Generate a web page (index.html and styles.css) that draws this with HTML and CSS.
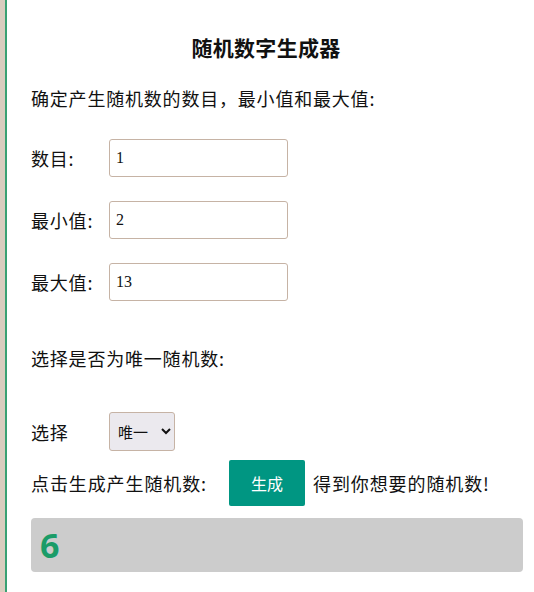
FILE: index.html
```html
<!DOCTYPE html>
<html lang="zh">

<head>
	<meta charset="utf-8">
	<title>随机数字生成器</title>
	<link rel="stylesheet" href="styles.css">
</head>

<body>

	<div class="page">
		<h3 class="title">随机数字生成器</h3>
		<p class="intro">确定产生随机数的数目，最小值和最大值:</p>

		<div class="field">
			<label for="count">数目:</label>
			<input id="count" type="text" value="1">
		</div>
		<div class="field">
			<label for="min">最小值:</label>
			<input id="min" type="text" value="2">
		</div>
		<div class="field">
			<label for="max">最大值:</label>
			<input id="max" type="text" value="13">
		</div>

		<p class="intro unique-intro">选择是否为唯一随机数:</p>

		<div class="field select-field">
			<label for="unique">选择</label>
			<select id="unique">
				<option>唯一</option>
				<option>不唯一</option>
			</select>
		</div>

		<div class="gen-row">
			<span>点击生成产生随机数:</span>
			<button id="gen" class="gen-btn">生成</button>
			<span>得到你想要的随机数!</span>
		</div>

		<div id="result" class="result">6</div>
	</div>

</body>

</html>
```

FILE: styles.css
```css
body {
	margin: 0;
	padding: 0;
	background-color: #dacdbf;
	font-family: "Noto Sans CJK SC", "Liberation Sans", sans-serif;
	color: #111;
}

.page {
	margin-left: 5px;
	min-height: 592px;
	box-sizing: border-box;
	border-left: 2px solid #3aa173;
	background-color: #fff;
	padding: 32px 11px 0 24px;
	display: flex;
	flex-direction: column;
}

.title {
	margin: 0;
	padding-right: 22px;
	text-align: center;
	font-size: 21px;
	line-height: 30px;
	font-weight: bold;
	letter-spacing: 0.3px;
}

.intro {
	margin: 22px 0 0 0;
	font-size: 18px;
	line-height: 28px;
	letter-spacing: 0.8px;
}

.unique-intro {
	margin-top: 43px;
}

.field {
	display: flex;
	align-items: center;
	margin-top: 24px;
	font-size: 18px;
	letter-spacing: 0.8px;
}

.intro + .field {
	margin-top: 27px;
}

.field label {
	width: 78px;
}

.field input {
	width: 179px;
	height: 38px;
	box-sizing: border-box;
	border: 1px solid #c6b3a5;
	border-radius: 3px;
	padding: 0 6px;
	font-family: "Liberation Serif", serif;
	font-size: 16px;
	letter-spacing: 0;
	color: #111;
}

.select-field {
	margin-top: 40px;
}

.unique-intro + .select-field {
	margin-top: 40px;
}

.field select {
	width: 66px;
	height: 39px;
	border: 1px solid #c6b3a5;
	border-radius: 3px;
	background-color: #ebe9ee;
	font-family: "Noto Sans CJK SC", sans-serif;
	font-size: 15px;
	letter-spacing: 0;
	color: #111;
	padding-left: 4px;
}

.gen-row {
	display: flex;
	align-items: center;
	gap: 8px;
	margin-top: 9px;
	font-size: 18px;
	letter-spacing: 0.9px;
}

.gen-btn {
	width: 76px;
	height: 46px;
	margin-left: 14px;
	border: none;
	border-radius: 2px;
	background-color: #009682;
	color: #fff;
	font-family: "Noto Sans CJK SC", sans-serif;
	font-size: 16px;
	letter-spacing: 0;
	cursor: pointer;
}

.result {
	margin-top: 12px;
	height: 54px;
	box-sizing: border-box;
	padding-left: 9px;
	background-color: #cccccc;
	border-radius: 4px;
	color: #1a9c68;
	font-family: "Open Sans", "Liberation Sans", sans-serif;
	font-size: 34px;
	font-weight: bold;
	line-height: 54px;
}
```
